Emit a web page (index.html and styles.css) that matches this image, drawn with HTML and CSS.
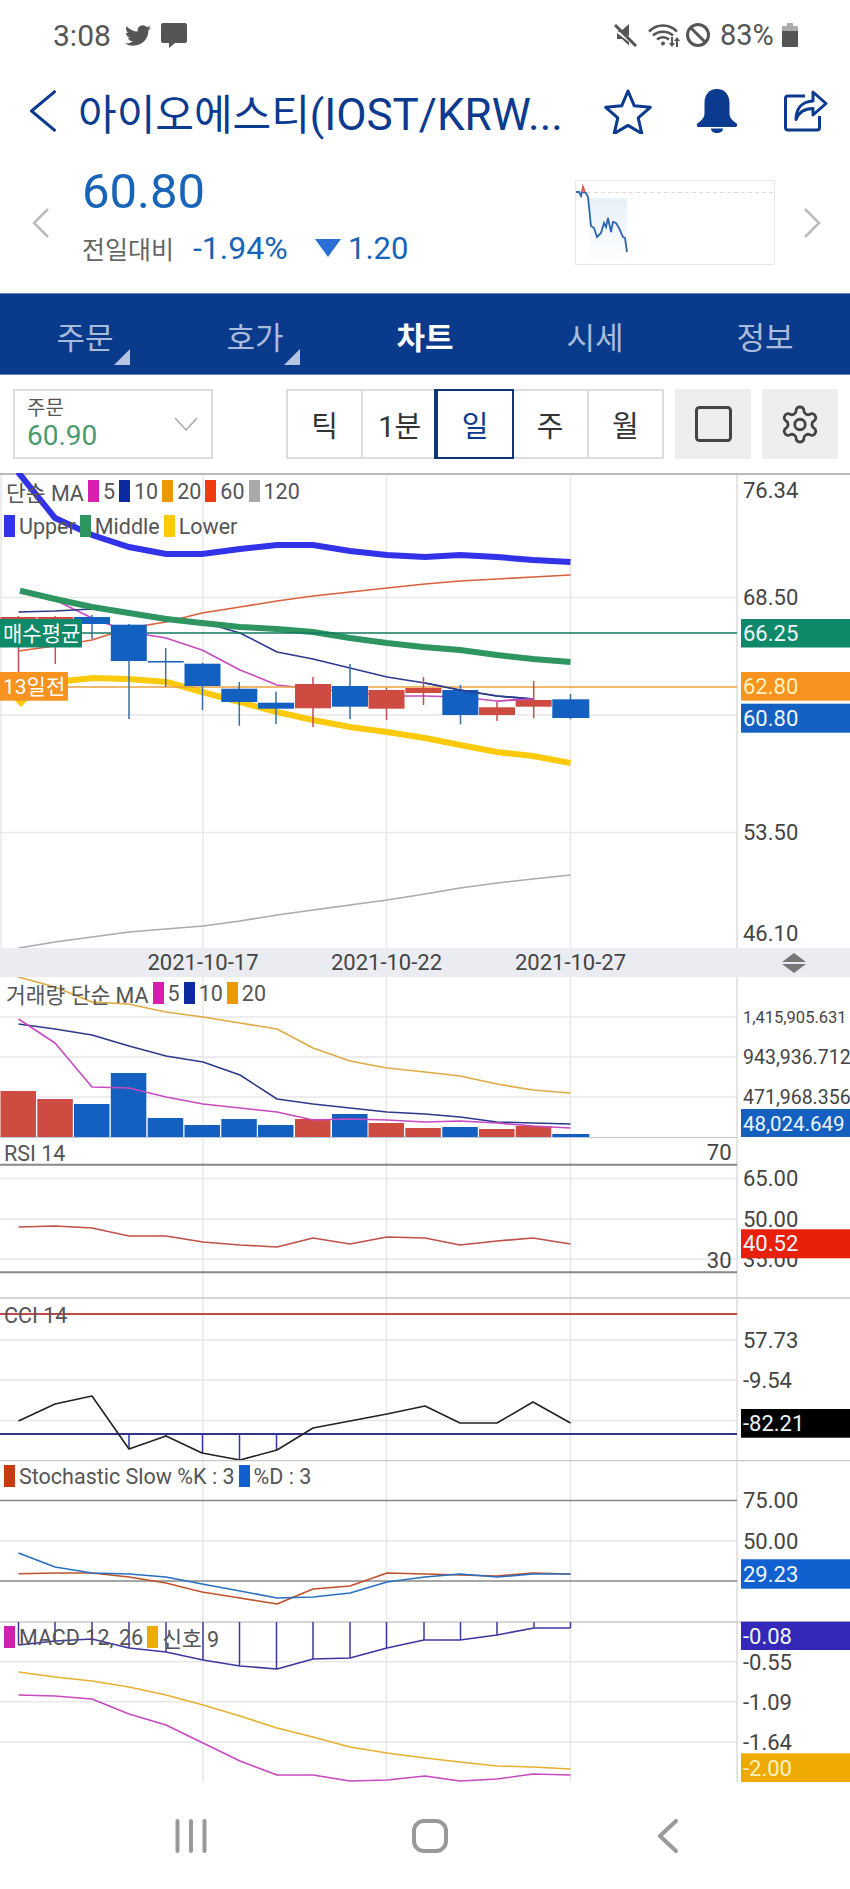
FILE: index.html
```html
<!DOCTYPE html>
<html lang="ko">
<head>
  <meta charset="UTF-8" />
  <meta name="viewport" content="width=device-width, initial-scale=1" />
  <title>아이오에스티 차트</title>
  <link rel="stylesheet" href="styles.css">
</head>
<body>

<div class="status">
  <span class="status-time">3:08</span>
  <svg class="st-twitter" width="26" height="21" viewBox="0 0 24 20" preserveAspectRatio="none"><path transform="translate(0 -2)" d="M23.953 4.57a10 10 0 01-2.825.775 4.958 4.958 0 002.163-2.723c-.951.555-2.005.959-3.127 1.184a4.92 4.92 0 00-8.384 4.482C7.69 8.095 4.067 6.13 1.64 3.162a4.822 4.822 0 00-.666 2.475c0 1.71.87 3.213 2.188 4.096a4.904 4.904 0 01-2.228-.616v.06a4.923 4.923 0 003.946 4.827 4.996 4.996 0 01-2.212.085 4.936 4.936 0 004.604 3.417 9.867 9.867 0 01-6.102 2.105c-.39 0-.779-.023-1.17-.067a13.995 13.995 0 007.557 2.209c9.053 0 13.998-7.496 13.998-13.985 0-.21 0-.42-.015-.63A9.935 9.935 0 0024 4.59z"/></svg>
  <svg class="st-chat" width="26" height="25" viewBox="0 0 26 25"><path d="M2 0h22a2 2 0 012 2v16a2 2 0 01-2 2H14l-6 5v-5H2a2 2 0 01-2-2V2a2 2 0 012-2z"/></svg>
  <svg class="st-mute" width="24" height="23" viewBox="0 0 24 23"><path d="M3 7h4l8-7v12zM3 9v6h5l7 6.5V18z"/><path class="st-line" d="M1 1l21 21"/></svg>
  <svg class="st-wifi" width="32" height="25" viewBox="0 0 32 25"><path class="st-arc" d="M1 8.5c8-8 20-8 28 0M5 12.5c5.500-5 14.500-5 20 0M9 16.500c3.500-3 8.500-3 12 0"/><path d="M15 22.500a2 2 0 100-4 2 2 0 000 4zM23 14h2v6h2l-3 4-3-4h2zM28 24h2v-6h2l-3-4-3 4h2z"/></svg>
  <svg class="st-dnd" width="24" height="24" viewBox="0 0 24 24"><circle class="st-line" cx="12" cy="12" r="10.500"/><path class="st-line" d="M5 5l14 14"/></svg>
  <span class="status-pct">83%</span>
  <svg class="st-batt" width="16" height="24" viewBox="0 0 16 24"><path class="st-batt-top" d="M5 0h6v3h4a1 1 0 011 1v4H0V4a1 1 0 011-1h4z"/><path d="M0 8h16v15a1 1 0 01-1 1H1a1 1 0 01-1-1z"/></svg>
</div>

<header class="head">
  <svg class="head-back" width="26" height="42" viewBox="0 0 26 42"><path d="M25.500 1L1.500 21l24 20"/></svg>
  <div class="head-title">아이오에스티(<span class="head-code">IOST/KRW...</span></div>
  <svg class="head-icon" width="48" height="46" viewBox="0 0 48 46"><path d="M24 3l6.300 14.800 16 1.500-12.100 10.600 3.600 15.700L24 37.400l-13.800 8.200 3.600-15.700L1.700 19.300l16-1.500z"/></svg>
  <svg class="head-bell" width="42" height="44" viewBox="0 0 42 44"><path d="M21 0c8 0 12.500 6 12.500 14v10c0 4 2 7 6.500 10 2 1.500 1.500 4-1 4H3c-2.500 0-3-2.500-1-4 4.500-3 6.500-6 6.500-10V14C8.500 6 13 0 21 0z"/><path d="M15 39.500h12c0 3-2.500 4.500-6 4.500s-6-1.500-6-4.500z"/></svg>
  <svg class="head-icon" width="44" height="42" viewBox="0 0 44 42"><path d="M21 6H4a2.500 2.500 0 00-2.500 2.500v29A2.500 2.500 0 004 40h29a2.500 2.500 0 002.500-2.500V26"/><path d="M29 2l13 11.500L29 25v-6.500c-8 0-14 3-17 11 0-11 6-18 17-18.500z"/></svg>
</header>

<section class="quote">
  <svg class="quote-arrow" width="17" height="30" viewBox="0 0 17 30"><path d="M16 1L2 15l14 14"/></svg>
  <div class="quote-main">
    <div class="quote-price">60.80</div>
    <div class="quote-row">
      <span class="quote-label">전일대비</span>
      <span class="quote-pct">-1.94%</span>
      <svg class="quote-down" width="26" height="18" viewBox="0 0 26 18"><path d="M0 0h26L13 18z"/></svg>
      <span class="quote-diff">1.20</span>
    </div>
  </div>
  <svg class="spark" width="200" height="85" viewBox="576 180 200 85">
    <defs>
      <linearGradient id="sparkFill" x1="0" y1="0" x2="0" y2="1">
        <stop offset="0" stop-color="#e8f0f9"/>
        <stop offset="1" stop-color="#ffffff"/>
      </linearGradient>
    </defs>
    <rect class="spark-box" x="576.500" y="180.500" width="199" height="84"/>
    <path class="spark-dash" d="M588 192.500h187"/>
    <rect x="590" y="198" width="38" height="66" fill="url(#sparkFill)"/>
    <polyline class="spark-line" points="577,192 580,192 582,196 583,192 587,193 589,197 592,226 595,228 598,237 602,233 605,223 607,227 609,218 612,232 614,222 617,223 620,228 624,237 626,238 628,252"/>
    <polyline class="spark-red" points="583,192 584,187 586,192"/>
  </svg>
  <svg class="quote-arrow quote-next" width="17" height="30" viewBox="0 0 17 30"><path d="M1 1l14 14L1 29"/></svg>
</section>

<nav class="tabs">
  <div class="tab has-menu">주문</div>
  <div class="tab has-menu">호가</div>
  <div class="tab active">차트</div>
  <div class="tab">시세</div>
  <div class="tab">정보</div>
</nav>

<div class="toolbar">
  <div class="order-box">
    <div>
      <div class="order-label">주문</div>
      <div class="order-price">60.90</div>
    </div>
    <svg width="24" height="14" viewBox="0 0 24 14"><path class="order-chevron" d="M1 1l11 12L23 1"/></svg>
  </div>
  <div class="seg">
    <div class="seg-cell">틱</div>
    <div class="seg-cell">1분</div>
    <div class="seg-cell selected">일</div>
    <div class="seg-cell">주</div>
    <div class="seg-cell">월</div>
  </div>
  <div class="tool-btn">
    <svg width="37" height="36" viewBox="0 0 37 36"><rect class="tool-stroke" x="1.500" y="1.500" width="34" height="33" rx="3"/></svg>
  </div>
  <div class="tool-btn">
    <svg width="42" height="43" viewBox="0 0 24 24"><path class="tool-stroke gear" d="M12.220 2h-.44a2 2 0 0 0-2 2v.18a2 2 0 0 1-1 1.730l-.43.25a2 2 0 0 1-2 0l-.15-.08a2 2 0 0 0-2.730.730l-.22.38a2 2 0 0 0 .73 2.730l.15.1a2 2 0 0 1 1 1.720v.51a2 2 0 0 1-1 1.740l-.15.09a2 2 0 0 0-.73 2.730l.22.38a2 2 0 0 0 2.730.730l.15-.08a2 2 0 0 1 2 0l.43.25a2 2 0 0 1 1 1.730V20a2 2 0 0 0 2 2h.44a2 2 0 0 0 2-2v-.18a2 2 0 0 1 1-1.730l.43-.25a2 2 0 0 1 2 0l.15.08a2 2 0 0 0 2.730-.73l.22-.39a2 2 0 0 0-.73-2.730l-.15-.08a2 2 0 0 1-1-1.740v-.5a2 2 0 0 1 1-1.740l.15-.09a2 2 0 0 0 .73-2.730l-.22-.38a2 2 0 0 0-2.730-.73l-.15.08a2 2 0 0 1-2 0l-.43-.25a2 2 0 0 1-1-1.730V4a2 2 0 0 0-2-2z"/><circle class="tool-stroke gear" cx="12" cy="12" r="3"/></svg>
  </div>
</div>

<div class="chart">

  <!-- 가격 -->
  <div class="panel">
    <svg class="plot" width="850" height="475" viewBox="0 473 850 475">
      <path class="grid" d="M1 473v475M203 473v475M386.500 473v475M570.500 473v475M0 597.500h737M0 715h737M0 832.500h737"/>
      <path class="axis-line" d="M737 473v475"/>
      <path class="top-line" d="M0 474h850"/>
      <polyline class="ma ma120" points="18.500,948 55,942 92,937 129,932 166,929 203,926 240,921 277,915 313,910 350,905 387,900 425,894 460,888 497,883 533,879 570.500,875"/>
      <polyline class="ma ma60" points="18.500,651 55,646 92,640 129,628 166,622 202,613 240,607 277,601 313,596 350,592 387,588 425,584 460,581 497,579 533,577 570.500,575"/>
      <polyline class="ma ma5" points="20,593 55,600 92,618 129,632 166,638 202,650 240,670 277,685 313,689 350,692 387,696 425,696 460,697 497,701 533,699"/>
      <polyline class="ma ma10" points="18.500,612 55,611 92,609 129,612 166,617 202,622 240,633 277,652 313,659 350,668 387,677 425,683 460,690 497,696 533,699"/>
      <polyline class="band upper" points="18,472 55,518 92,535 129,547 166,554 202,554 240,549 277,545 313,545 350,551 387,555 425,557 460,555 497,557 533,560 570.500,562"/>
      <polyline class="band middle" points="20,590.700 55,599 92,607 129,613 166,619 202,623 240,627 277,629 313,632 350,638 387,643 423,647 460,650 497,655 533,659 570.500,662"/>
      <polyline class="band lower" points="18.500,690 55,682 93,678 128,679 167,682 202,692 240,702 277,712 313,720 350,727 387,732 425,738 460,745 497,752 533,756 570.500,763"/>
      <path class="mark-teal" d="M0 633h737"/>
      <path class="mark-orange" d="M0 687h737"/>
      <path class="wick wick-up" d="M18.500 616v56M55.300 616v48M313 677v50M386.500 688v32M423.500 677v28M497 701.700v19.300M533.700 680.700v37.600"/>
      <path class="wick wick-dn" d="M92 615v24M129 624v95M165.700 648v39M202.500 662.700v47.300M239.300 682v43.700M276 691.700v32.300M350 664v55M460.500 685v39.300M570.500 694v25.300"/>
      <g class="up">
        <rect x="0.500" y="617" width="36" height="26"/>
        <rect x="37.300" y="617" width="36" height="24"/>
        <rect x="295" y="684" width="36" height="24.300"/>
        <rect x="368.500" y="690" width="36" height="18.700"/>
        <rect x="405.300" y="688" width="36" height="5"/>
        <rect x="479" y="707.300" width="36" height="7.700"/>
        <rect x="515.700" y="700" width="36" height="6.700"/>
      </g>
      <g class="dn">
        <rect x="74" y="617" width="36" height="7"/>
        <rect x="110.800" y="624.700" width="36" height="36.300"/>
        <rect x="147.700" y="661" width="36" height="1.500"/>
        <rect x="184.500" y="663.700" width="36" height="22.300"/>
        <rect x="221.300" y="688.700" width="36" height="13.300"/>
        <rect x="258" y="702.700" width="36" height="6"/>
        <rect x="332" y="686" width="36" height="20.700"/>
        <rect x="442.300" y="690" width="36" height="25"/>
        <rect x="552.300" y="699.300" width="37" height="18.700"/>
      </g>
      <polyline class="ma ma10" points="425,683 460,690 497,696 533,699"/>
      <polyline class="ma ma5" points="497,701 533,699"/>
      <text class="ax" x="743" y="490">76.34</text>
      <text class="ax" x="743" y="597">68.50</text>
      <text class="ax" x="743" y="832">53.50</text>
      <text class="ax" x="743" y="933">46.10</text>
      <rect class="tag-teal" x="741" y="619" width="109" height="28.500"/>
      <text class="ax ax-on" x="743" y="633.500">66.25</text>
      <rect class="tag-orange" x="741" y="672" width="109" height="28.700"/>
      <text class="ax ax-on-orange" x="743" y="686.500">62.80</text>
      <rect class="tag-blue" x="741" y="703.700" width="109" height="29"/>
      <text class="ax ax-on" x="743" y="718">60.80</text>
      <path class="tag-foot" d="M14 700h14l-7 7z"/>
      <rect class="tag-teal" x="0" y="619" width="82" height="28.500"/>
      <text class="ax-side" x="3" y="633.500">매수평균</text>
      <rect class="tag-orange" x="0" y="672" width="68" height="28.700"/>
      <text class="ax-side" x="3" y="686.500">13일전</text>
    </svg>
    <div class="legend legend-price">
      <div class="legend-row">
        <span class="legend-name">단순 MA</span>
        <i class="sw sw-pink"></i><span>5</span>
        <i class="sw sw-navy"></i><span>10</span>
        <i class="sw sw-amber"></i><span>20</span>
        <i class="sw sw-red"></i><span>60</span>
        <i class="sw sw-grey"></i><span>120</span>
      </div>
      <div class="legend-row">
        <i class="sw sw-upper"></i><span>Upper</span>
        <i class="sw sw-middle"></i><span>Middle</span>
        <i class="sw sw-lower"></i><span>Lower</span>
      </div>
    </div>
  </div>

  <!-- 날짜 -->
  <div class="dates">
    <span class="date">2021-10-17</span>
    <span class="date">2021-10-22</span>
    <span class="date">2021-10-27</span>
    <svg class="dates-resize" width="24" height="20" viewBox="0 0 24 20"><path d="M12 0l12 9H0zM0 11h24l-12 9z"/></svg>
  </div>

  <!-- 거래량 -->
  <div class="panel">
    <svg class="plot" width="850" height="160" viewBox="0 977 850 160">
      <path class="grid" d="M203 977v160M386.500 977v160M570.500 977v160M0 1017h737M0 1057h737M0 1097h737"/>
      <path class="axis-line" d="M737 977v160"/>
      <g class="up">
        <rect x="0.500" y="1091" width="35.500" height="46"/>
        <rect x="37.300" y="1099" width="35.500" height="38"/>
        <rect x="295" y="1119" width="35.500" height="18"/>
        <rect x="368.500" y="1123" width="35.500" height="14"/>
        <rect x="405.300" y="1128" width="35.500" height="9"/>
        <rect x="479" y="1129" width="35.500" height="8"/>
        <rect x="515.700" y="1126" width="35.500" height="11"/>
      </g>
      <g class="dn">
        <rect x="74" y="1104" width="35.500" height="33"/>
        <rect x="110.800" y="1073" width="35.500" height="64"/>
        <rect x="147.700" y="1118" width="35.500" height="19"/>
        <rect x="184.500" y="1125" width="35.500" height="12"/>
        <rect x="221.300" y="1119" width="35.500" height="18"/>
        <rect x="258" y="1125" width="35.500" height="12"/>
        <rect x="332" y="1114" width="35.500" height="23"/>
        <rect x="442.300" y="1127" width="35.500" height="10"/>
        <rect x="552.300" y="1134" width="37" height="3"/>
      </g>
      <polyline class="ma vol20" points="18.500,977 55,987 92,1002 128,1004 166,1012 203,1017 240,1023 277,1029 313,1048 350,1061 387,1068 425,1072 460,1076 497,1084 533,1090 570.500,1093"/>
      <polyline class="ma ma10" points="18.500,1024 55,1029 92,1035 129,1046 166,1056 203,1062 240,1075 277,1099 313,1104 350,1108 387,1112 425,1114 460,1117 497,1122 533,1123 570.500,1124"/>
      <polyline class="ma ma5" points="18.500,1019 55,1043 92,1087 129,1088 166,1097 203,1104 240,1108 277,1112 313,1120 350,1119 387,1120 425,1122 460,1121 497,1123 533,1126 570.500,1128"/>
      <text class="ax ax-s1" x="743" y="1017">1,415,905.631</text>
      <text class="ax ax-s2" x="743" y="1057">943,936.712</text>
      <text class="ax ax-s2" x="743" y="1097">471,968.356</text>
      <rect class="tag-blue" x="741" y="1109" width="109" height="28"/>
      <text class="ax ax-on ax-s3" x="743" y="1123.500">48,024.649</text>
    </svg>
    <div class="legend">
      <div class="legend-row">
        <span class="legend-name">거래량 단순 MA</span>
        <i class="sw sw-pink"></i><span>5</span>
        <i class="sw sw-navy"></i><span>10</span>
        <i class="sw sw-amber"></i><span>20</span>
      </div>
    </div>
  </div>

  <!-- RSI -->
  <div class="panel">
    <svg class="plot" width="850" height="162" viewBox="0 1137 850 162">
      <path class="grid" d="M203 1137v162M386.500 1137v162M570.500 1137v162M0 1178.500h737M0 1219h737M0 1259h737"/>
      <path class="axis-line" d="M737 1137v162"/>
      <path class="base-line" d="M0 1137.500h737"/>
      <path class="heavy" d="M0 1164.700h737M0 1272.300h737"/>
      <path class="panel-end" d="M0 1298h850"/>
      <polyline class="ma rsi" points="18.500,1227 55,1226 92,1228 129,1236 166,1236 203,1242 240,1245 277,1247 313,1238 350,1244 387,1237 425,1238 460,1245 497,1241 533,1238 570.500,1244"/>
      <text class="ax" x="743" y="1178">65.00</text>
      <text class="ax" x="743" y="1219">50.00</text>
      <text class="ax" x="743" y="1259">35.00</text>
      <text class="ax ax-end" x="731.500" y="1152">70</text>
      <rect class="tag-red" x="741" y="1229.300" width="109" height="29"/>
      <text class="ax ax-on" x="743" y="1243.500">40.52</text>
      <text class="ax ax-end" x="731.500" y="1260">30</text>
    </svg>
    <div class="legend">
      <div class="legend-row"><span class="legend-name legend-flush">RSI 14</span></div>
    </div>
  </div>

  <!-- CCI -->
  <div class="panel">
    <svg class="plot" width="850" height="161" viewBox="0 1299 850 161">
      <path class="grid" d="M203 1299v161M386.500 1299v161M570.500 1299v161M0 1340h737M0 1380h737M0 1420.500h737"/>
      <path class="axis-line" d="M737 1299v161"/>
      <path class="cci-top" d="M0 1314h737"/>
      <path class="cci-base" d="M0 1434h737"/>
      <path class="osc" d="M129 1434v15M166 1434v2M202.500 1434v19M239.500 1434v26M276.500 1434v16"/>
      <polyline class="ma cci" points="18.500,1421 55,1404 92,1396 129,1449 166,1436 202,1453 240,1460 277,1450 313,1428 350,1421 387,1414 425,1406 460,1423 497,1423 533,1402 570.500,1423"/>
      <text class="ax" x="743" y="1340">57.73</text>
      <text class="ax" x="743" y="1380">-9.54</text>
      <rect class="tag-black" x="741" y="1409" width="109" height="28.700"/>
      <text class="ax ax-on" x="743" y="1423.500">-82.21</text>
    </svg>
    <div class="legend">
      <div class="legend-row"><span class="legend-name legend-flush">CCI 14</span></div>
    </div>
  </div>

  <!-- Stochastic -->
  <div class="panel">
    <svg class="plot" width="850" height="161" viewBox="0 1460 850 161">
      <path class="grid" d="M203 1460v161M386.500 1460v161M570.500 1460v161M0 1541h737"/>
      <path class="axis-line" d="M737 1460v161"/>
      <path class="panel-end" d="M0 1460.500h850"/>
      <path class="mid" d="M0 1500.500h737M0 1581h737"/>
      <polyline class="ma stok" points="18.500,1573.700 55,1573 92,1573 129,1577 166,1583 202,1592 240,1598 277,1604 313,1589 350,1586 387,1573 425,1574 460,1575 497,1576 533,1573 570.500,1574"/>
      <polyline class="ma stod" points="18.500,1553 55,1567 92,1573 129,1574 166,1577 202,1584 240,1591 277,1598 313,1597 350,1593 387,1582 425,1577 460,1574 497,1577 533,1574 570.500,1574"/>
      <text class="ax" x="743" y="1500">75.00</text>
      <text class="ax" x="743" y="1541">50.00</text>
      <rect class="tag-blue2" x="741" y="1559.300" width="109" height="29.400"/>
      <text class="ax ax-on" x="743" y="1574">29.23</text>
    </svg>
    <div class="legend">
      <div class="legend-row">
        <i class="sw sw-stok"></i><span>Stochastic Slow %K : 3</span>
        <i class="sw sw-blue"></i><span>%D : 3</span>
      </div>
    </div>
  </div>

  <!-- MACD -->
  <div class="panel">
    <svg class="plot" width="850" height="161" viewBox="0 1621 850 161">
      <path class="grid" d="M203 1621v161M386.500 1621v161M570.500 1621v161M0 1661.700h737M0 1701.700h737M0 1742h737"/>
      <path class="axis-line" d="M737 1621v161"/>
      <path class="panel-end" d="M0 1622h850"/>
      <path class="osc osc-macd" d="M18.500 1622v23M55 1622v19M92 1622v17M129 1622v26M166 1622v30M203 1622v38M239.500 1622v44M276.500 1622v47M313 1622v37M350 1622v36M386.500 1622v26M424 1622v18M460.500 1622v18M497 1622v13M534 1622v6M570.500 1622v6"/>
      <polyline class="ma macd-osc" points="18.500,1645 55,1641 92,1639 129,1648 166,1652 203,1660 240,1666 277,1669 313,1659 350,1658 387,1648 424,1640 460,1640 497,1635 534,1628 570.500,1628"/>
      <polyline class="ma macd-sig" points="18.500,1672 55,1677 92,1681 129,1687 166,1695 203,1705 240,1716 277,1728 313,1737 350,1747 387,1753 425,1758 460,1762 497,1766 533,1767 570.500,1769"/>
      <polyline class="ma ma5" points="18.500,1695 55,1696 92,1699 129,1714 166,1725 203,1743 240,1761 277,1775 313,1775 350,1781 387,1780 425,1776 460,1781 497,1779 533,1774 570.500,1775"/>
      <rect class="tag-indigo" x="741" y="1621.700" width="109" height="28.300"/>
      <text class="ax ax-on" x="743" y="1636">-0.08</text>
      <text class="ax" x="743" y="1662">-0.55</text>
      <text class="ax" x="743" y="1702">-1.09</text>
      <text class="ax" x="743" y="1742">-1.64</text>
      <rect class="tag-amber" x="741" y="1753.300" width="109" height="28.700"/>
      <text class="ax ax-on-orange" x="743" y="1768">-2.00</text>
    </svg>
    <div class="legend">
      <div class="legend-row">
        <i class="sw sw-macd"></i><span>MACD 12, 26</span>
        <i class="sw sw-signal"></i><span>신호 9</span>
      </div>
    </div>
  </div>

</div>

<div class="navbar">
  <svg width="32" height="34" viewBox="0 0 32 34"><path class="nav-stroke" d="M2.500 2v30M16 2v30M29.500 2v30"/></svg>
  <svg class="nav-home" width="36" height="34" viewBox="0 0 36 34"><rect class="nav-stroke" x="2" y="2" width="32" height="30" rx="10"/></svg>
  <svg width="20" height="34" viewBox="0 0 20 34"><path class="nav-stroke" d="M18 2L2 17l16 15"/></svg>
</div>

</body>
</html>
```

FILE: styles.css
```css
* {
  box-sizing: border-box;
}
body {
  margin: 0;
  width: 850px;
  height: 1889px;
  overflow: hidden;
  background: #fff;
  font-family: Roboto, "Noto Sans CJK KR", sans-serif;
  color: #333;
}
svg {
  display: block;
  flex: none;
}

/* 상태바 */
.status {
  display: flex;
  align-items: center;
  height: 70px;
  padding: 0 52px 0 53px;
  fill: #555;
  color: #555;
}
.status-time {
  font-size: 30px;
  width: 58px;
}
.status-pct {
  font-size: 29px;
  margin-left: 10px;
  width: 56px;
}
.st-twitter {
  margin-left: 14px;
}
.st-chat {
  margin-left: 10px;
}
.st-mute {
  margin-left: auto;
}
.st-wifi {
  margin-left: 10px;
}
.st-dnd {
  margin-left: 6px;
}
.st-batt {
  margin-left: 6px;
}
.st-batt-top {
  fill: #aaa;
}
.st-line {
  fill: none;
  stroke: #555;
  stroke-width: 3;
}
.st-arc {
  fill: none;
  stroke: #555;
  stroke-width: 2.500;
}

/* 헤더 */
.head {
  display: flex;
  align-items: center;
  height: 82px;
  padding: 0 22px 0 30px;
}
.head-back path {
  fill: none;
  stroke: #0b3a8e;
  stroke-width: 3;
}
.head-title {
  flex: 1;
  margin-left: 22px;
  font-size: 42px;
  color: #0b3a8e;
  white-space: nowrap;
}
.head-code {
  font-size: 44px;
}
.head-icon {
  fill: none;
  stroke: #0b3a8e;
  stroke-width: 3;
  stroke-linejoin: round;
}
.head-bell {
  fill: #0b3a8e;
  margin: 0 46px 0 44px;
}

/* 시세 요약 */
.quote {
  display: flex;
  align-items: center;
  height: 141px;
  padding: 0 29px 0 32px;
}
.quote-arrow path {
  fill: none;
  stroke: #bbb;
  stroke-width: 2.500;
}
.quote-main {
  flex: 1;
  align-self: flex-start;
  margin-left: 33px;
  padding-top: 14px;
}
.quote-price {
  height: 52px;
  line-height: 52px;
  font-size: 49px;
  color: #1864b8;
}
.quote-row {
  display: flex;
  align-items: center;
  height: 36px;
  margin-top: 12px;
}
.quote-label {
  width: 93px;
  font-size: 25px;
  color: #666;
}
.quote-pct,
.quote-diff {
  font-size: 31px;
  color: #1864b8;
}
.quote-pct {
  font-size: 32px;
  margin-left: 18px;
  width: 96px;
}
.quote-down {
  fill: #2a6fd6;
  margin-left: 26px;
}
.quote-diff {
  margin-left: 7px;
}
.quote-next {
  margin-left: 29px;
}
.spark-box {
  fill: #fff;
  stroke: #e8e8e8;
}
.spark-dash {
  stroke: #ddd;
  stroke-dasharray: 4 3;
}
.spark-line {
  fill: none;
  stroke: #2a66b0;
  stroke-width: 1.800;
}
.spark-red {
  fill: none;
  stroke: #d05a50;
  stroke-width: 1.800;
}

/* 탭 */
.tabs {
  display: grid;
  grid-template-columns: repeat(5, 170px);
  height: 82px;
  background: #0a3a8c;
  border-top: 1px solid #5f86b8;
  border-bottom: 1px solid #5f86b8;
}
.tab {
  position: relative;
  display: flex;
  align-items: center;
  justify-content: center;
  padding-top: 3px;
  font-size: 31px;
  color: #a9bcdb;
}
.tab.active {
  color: #fff;
  font-weight: 700;
}
.tab.has-menu::after {
  content: "";
  position: absolute;
  right: 40px;
  bottom: 9px;
  border-style: solid;
  border-width: 0 0 16px 16px;
  border-color: transparent transparent #b3c5e2 transparent;
}

/* 툴바 */
.toolbar {
  display: flex;
  align-items: flex-start;
  height: 98px;
  padding: 14px 12px 0 13px;
}
.order-box {
  display: flex;
  align-items: center;
  justify-content: space-between;
  width: 200px;
  height: 70px;
  padding: 0 13px 0 12px;
  border: 2px solid #ddd;
}
.order-label {
  font-size: 20px;
  line-height: 24px;
  color: #555;
}
.order-price {
  font-size: 28px;
  line-height: 32px;
  color: #4a9a70;
}
.order-chevron {
  fill: none;
  stroke: #aaa;
  stroke-width: 1.500;
}
.seg {
  display: flex;
  width: 378px;
  height: 70px;
  margin-left: 73px;
  border: 2px solid #ddd;
}
.seg-cell {
  flex: 1;
  display: flex;
  align-items: center;
  justify-content: center;
  border-left: 2px solid #ddd;
  font-size: 29px;
  color: #333;
}
.seg-cell:first-child {
  border-left: 0;
}
.seg-cell.selected {
  position: relative;
  border-left-color: #0b3a7c;
  color: #0b3a8e;
  box-shadow: 0 0 0 2px #0b3a7c;
}
.tool-btn {
  display: flex;
  align-items: center;
  justify-content: center;
  width: 76px;
  height: 70px;
  margin-left: 11px;
  background: #eee;
}
.tool-stroke {
  fill: none;
  stroke: #444;
  stroke-width: 3;
}
.tool-stroke.gear {
  stroke-width: 1.600;
}

/* 차트 */
.chart {
  display: flex;
  flex-direction: column;
  height: 1309px;
}
.panel {
  position: relative;
}
.legend {
  position: absolute;
  left: 4px;
  top: 5px;
  display: flex;
  flex-direction: column;
  gap: 13px;
  font-size: 21.500px;
  color: #555;
}
.legend-price {
  top: 7px;
}
.legend-row {
  display: flex;
  align-items: center;
  gap: 4px;
  height: 22px;
  white-space: nowrap;
}
.legend-name {
  margin-left: 2px;
}
.legend-flush {
  margin-left: 0;
}
.sw {
  display: block;
  width: 11px;
  height: 22px;
}
.sw-pink { background: #d81fb0; }
.sw-navy { background: #0d2aa0; }
.sw-amber { background: #e89a00; }
.sw-red { background: #f03a10; }
.sw-grey { background: #aaa; }
.sw-upper { background: #3232e8; }
.sw-middle { background: #2e9560; }
.sw-lower { background: #fcca0a; }
.sw-stok { background: #c83a10; }
.sw-blue { background: #1060d0; }
.sw-macd { background: #d020b0; }
.sw-signal { background: #eeaa00; }

.dates {
  position: relative;
  display: block;
  height: 29px;
  background: #eaecf1;
}
.date {
  position: absolute;
  top: 0;
  width: 120px;
  margin-left: -60px;
  line-height: 29px;
  text-align: center;
  font-size: 22px;
  color: #444;
}
.date:nth-child(1) { left: 203px; }
.date:nth-child(2) { left: 386.500px; }
.date:nth-child(3) { left: 570.500px; }
.dates-resize {
  position: absolute;
  left: 782px;
  top: 5px;
  fill: #777;
}

.grid {
  fill: none;
  stroke: #e8e8ea;
  stroke-width: 1.500;
}
.axis-line {
  stroke: #dcdcdc;
  stroke-width: 1.500;
}
.top-line {
  stroke: #bbb;
  stroke-width: 2;
}
.base-line {
  stroke: #bccbdc;
}
.heavy {
  stroke: #888;
  stroke-width: 2;
}
.mid {
  stroke: #888;
  stroke-width: 1.500;
}
.panel-end {
  stroke: #c8c8c8;
  stroke-width: 1.500;
}
.ma {
  fill: none;
  stroke-width: 1.600;
  stroke-linejoin: round;
}
.ma5 { stroke: #c84ac0; }
.ma10 { stroke: #2a3a8c; }
.ma60 { stroke: #d8603c; }
.ma120 { stroke: #aaa; }
.vol20 { stroke: #e0aa44; }
.rsi { stroke: #c05048; }
.cci { stroke: #222; }
.stok { stroke: #c0502a; }
.stod { stroke: #2a70c0; }
.macd-osc { stroke: #3c38a0; }
.macd-sig { stroke: #e8b030; }
.band {
  fill: none;
  stroke-width: 6;
}
.upper { stroke: #3232e8; }
.middle { stroke: #2e9560; }
.lower { stroke: #fcca0a; }
.mark-teal {
  stroke: #117a60;
  stroke-width: 1.500;
}
.mark-orange {
  stroke: #e8a040;
  stroke-width: 1.500;
}
.cci-top {
  stroke: #c04a48;
  stroke-width: 2;
}
.cci-base {
  stroke: #33338a;
  stroke-width: 2;
}
.osc {
  stroke: #3434b0;
  stroke-width: 1.500;
}
.osc-macd {
  stroke: #3c38a0;
}
.wick {
  stroke-width: 1.500;
}
.wick-up { stroke: #c05050; }
.wick-dn { stroke: #3a6ea8; }
.up { fill: #cd4b40; }
.dn { fill: #1460c0; }

.ax {
  font-size: 22px;
  fill: #444;
  dominant-baseline: central;
}
.ax-end {
  text-anchor: end;
}
.ax-on {
  fill: #eef6ff;
}
.ax-on-orange {
  fill: #fff2c0;
}
.ax-s1 { font-size: 16.500px; }
.ax-s2 { font-size: 19.500px; }
.ax-s3 { font-size: 20.500px; }
.ax-side {
  font-size: 21px;
  fill: #fff;
  dominant-baseline: central;
}
.tag-teal { fill: #0e8a6a; }
.tag-orange { fill: #f7931e; }
.tag-blue { fill: #1460c0; }
.tag-blue2 { fill: #1060d0; }
.tag-red { fill: #e8200a; }
.tag-black { fill: #000; }
.tag-indigo { fill: #3428b8; }
.tag-amber { fill: #eeaa00; }
.tag-foot { fill: #fcca0a; }

/* 하단 내비 */
.navbar {
  display: flex;
  align-items: center;
  justify-content: space-between;
  height: 107px;
  padding: 1px 172px 0 175px;
}
.nav-home {
  margin-right: 5px;
}
.nav-stroke {
  fill: none;
  stroke: #999;
  stroke-width: 4;
  stroke-linecap: round;
  stroke-linejoin: round;
}
```
